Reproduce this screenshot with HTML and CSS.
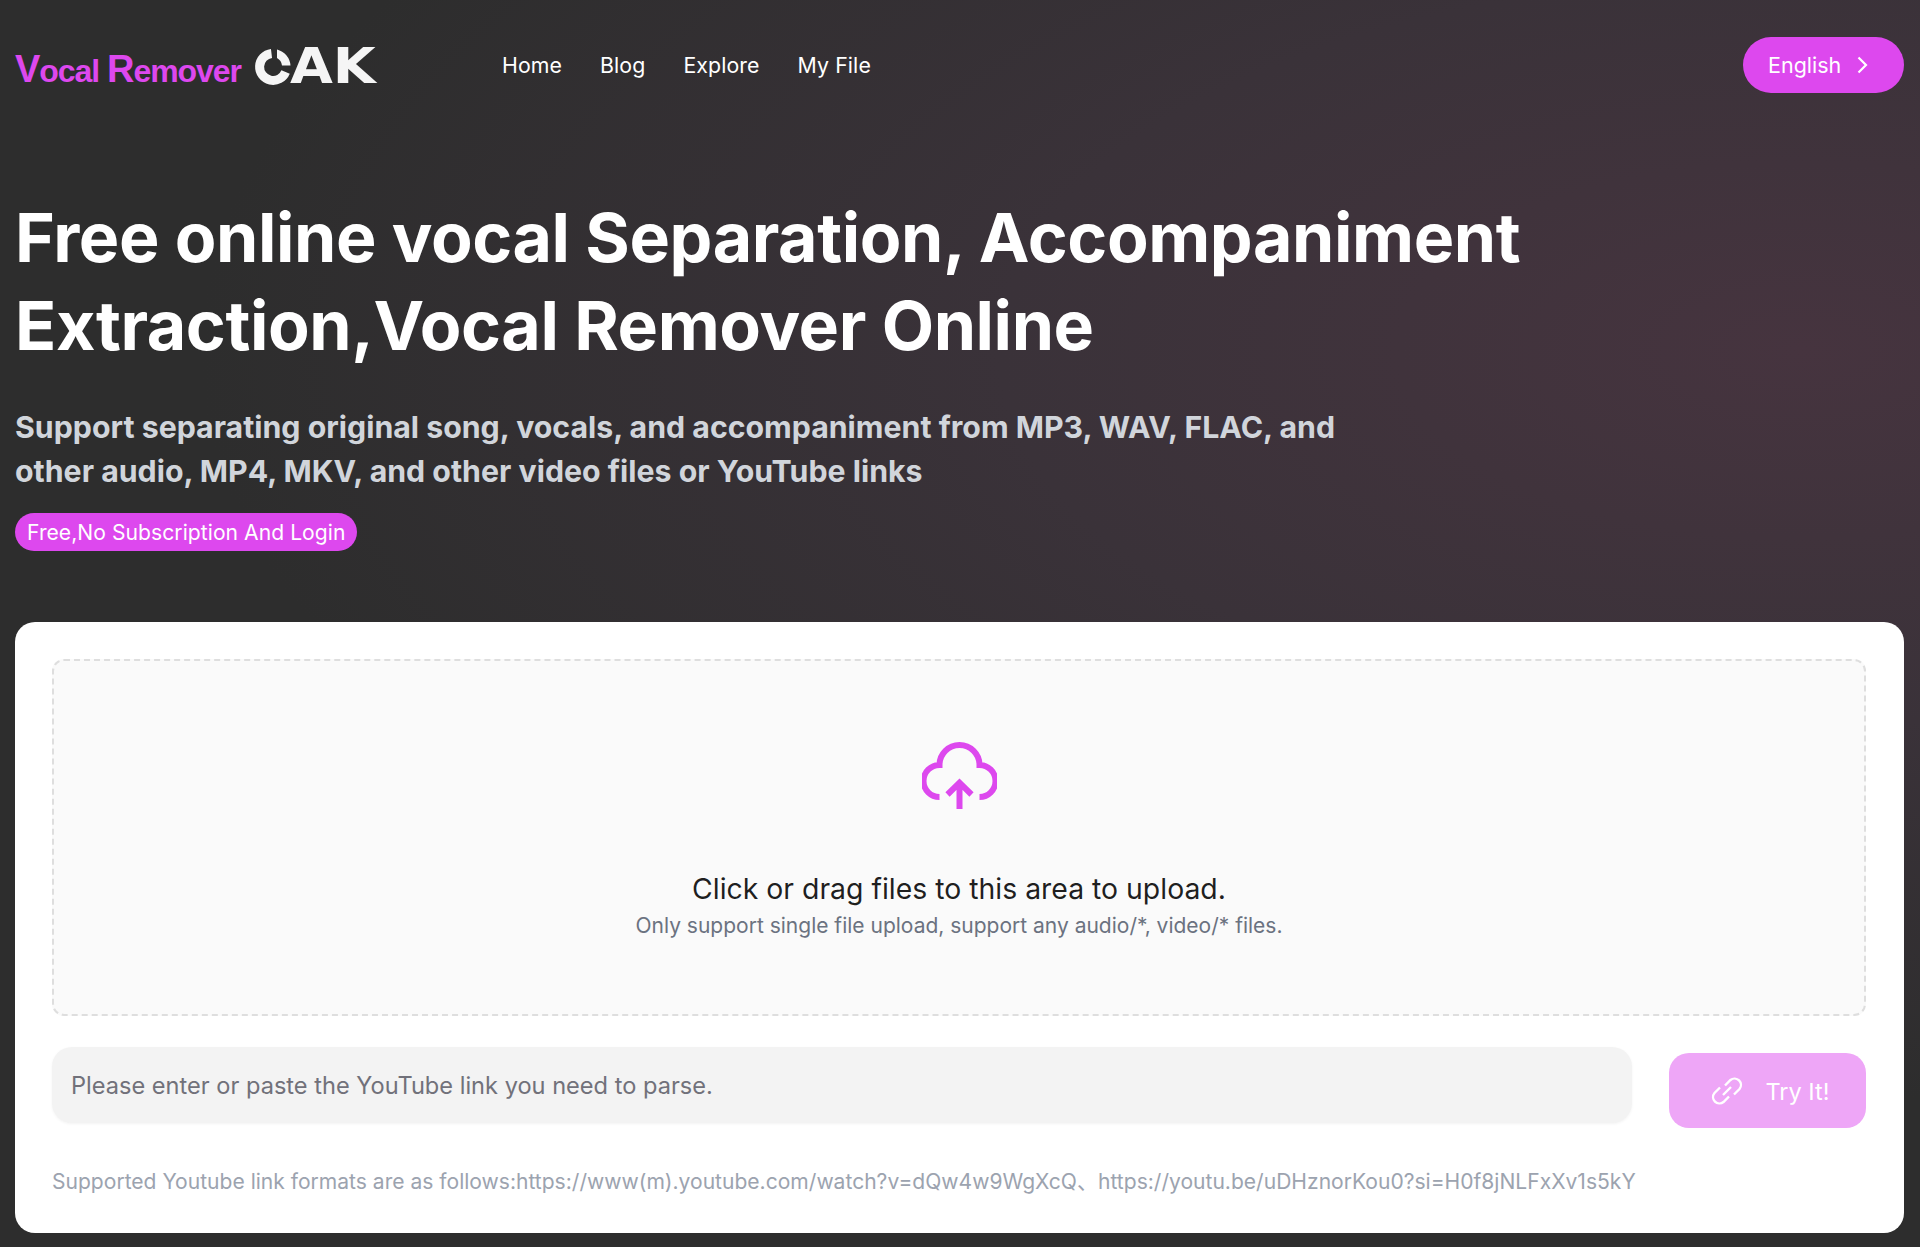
FILE: index.html
```html
<!DOCTYPE html>
<html lang="en">
<head>
    <meta charset="UTF-8">
    <title>Vocal Remover OAK</title>
    <link rel="stylesheet" href="styles.css">
</head>
<body>
<div class="page">
    <header class="topbar">
        <a class="logo" href="#">
            <span class="logo-name"><span class="big">V</span>ocal <span class="big">R</span>emover</span>
            <span class="logo-oak">
                <svg class="logo-ring" viewBox="0 0 38 38" width="38" height="38" aria-hidden="true">
                    <path d="M17.500 5.500A13.500 13.500 0 1 0 31.600 24" fill="none" stroke="#f5f5f5" stroke-width="9"/>
                    <path d="M23 1.500A18 18 0 0 1 36.500 17.500H28A10 10 0 0 0 23 10Z" fill="#f5f5f5"/>
                </svg>
                <span class="logo-ak">AK</span>
            </span>
        </a>
        <nav class="nav">
            <a href="#">Home</a>
            <a href="#">Blog</a>
            <a href="#">Explore</a>
            <a href="#">My File</a>
        </nav>
        <button class="lang-btn">
            English
            <svg viewBox="0 0 24 24" width="24" height="24" aria-hidden="true">
                <path d="M8.500 4.500l7.500 7.500-7.500 7.500" fill="none" stroke="#fff" stroke-width="2.200"/>
            </svg>
        </button>
    </header>

    <section class="hero">
        <h1>Free online vocal Separation, Accompaniment<br>Extraction,Vocal Remover Online</h1>
        <h2>Support separating original song, vocals, and accompaniment from MP3, WAV, FLAC, and<br>other audio, MP4, MKV, and other video files or YouTube links</h2>
        <span class="badge">Free,No Subscription And Login</span>
    </section>

    <main class="card">
        <div class="dropzone">
            <svg class="cloud" viewBox="0 0 75 67" width="75" height="67" aria-hidden="true">
                <path d="M17.500 55A16 16 0 0 1 17.500 23A20 20 0 0 1 57.500 23A16 16 0 0 1 57.500 55" fill="none" stroke="#dd48ee" stroke-width="6"/>
                <path d="M37.500 67V41M25.500 52.500L37.500 40.700L49.500 52.500" fill="none" stroke="#dd48ee" stroke-width="6"/>
            </svg>
            <p class="drop-title">Click or drag files to this area to upload.</p>
            <p class="drop-hint">Only support single file upload, support any audio/*, video/* files.</p>
        </div>
        <div class="link-row">
            <input class="link-input" type="text" placeholder="Please enter or paste the YouTube link you need to parse.">
            <button class="try-btn">
                <svg viewBox="0 0 32 32" width="32" height="32" aria-hidden="true">
                    <path d="M14 10.500l5.500-5.500a6.400 6.400 0 0 1 9 9l-5.500 5.500M18 21.500l-5.500 5.500a6.400 6.400 0 0 1-9-9l5.500-5.500M12 20l8-8" fill="none" stroke="#fff" stroke-width="2.400"/>
                </svg>
                Try It!
            </button>
        </div>
        <p class="formats">Supported Youtube link formats are as follows:https://www(m).youtube.com/watch?v=dQw4w9WgXcQ、https://youtu.be/uDHznorKou0?si=H0f8jNLFxXv1s5kY</p>
    </main>
</div>
</body>
</html>
```

FILE: styles.css
```css
* {
    box-sizing: border-box;
}

html, body {
    margin: 0;
    height: 100%;
}

body {
    font-family: Inter, "Noto Sans CJK SC", sans-serif;
    color: #fff;
    background-color: #2d2d2d;
}

.page {
    height: 1247px;
    padding: 0 16px 14px 15px;
    overflow: hidden;
    background: radial-gradient(ellipse 1600px 750px at 1800px 350px, #46343f 0%, #3a3239 50%, #2d2d2d 100%);
}

.topbar {
    display: flex;
    align-items: center;
    height: 130px;
}

.logo {
    display: flex;
    align-items: center;
    gap: 13px;
    width: 487px;
    text-decoration: none;
}

.logo-name {
    margin-top: 8px;
    color: #dd48ee;
    font-family: "Liberation Sans", sans-serif;
    font-size: 32px;
    font-weight: 700;
    letter-spacing: -1.05px;
}

.logo-name .big {
    font-size: 38px;
}

.logo-oak {
    display: flex;
    align-items: center;
    margin-top: 3px;
}

.logo-ring {
    margin-right: -2px;
}

.logo-ak {
    color: #f5f5f5;
    font-family: "DejaVu Sans", sans-serif;
    font-size: 49px;
    line-height: 38px;
    font-weight: 700;
    transform: scaleX(1.13);
    transform-origin: left center;
}

.nav {
    display: flex;
    gap: 38px;
}

.nav a {
    color: #fff;
    font-size: 21.300px;
    font-weight: 400;
    letter-spacing: 0.1px;
    text-decoration: none;
}

.lang-btn {
    display: flex;
    align-items: center;
    gap: 9px;
    margin-left: auto;
    width: 161px;
    height: 56px;
    padding: 0 0 0 25px;
    border: 0;
    border-radius: 28px;
    color: #fff;
    background-color: #dd48ee;
    font-family: inherit;
    font-size: 21.500px;
    font-weight: 400;
}

.hero h1 {
    margin: 63px 0 0;
    font-size: 68px;
    line-height: 88px;
    font-weight: 700;
    letter-spacing: -0.4px;
}

.hero h2 {
    margin: 36px 0 0;
    color: #d1d5db;
    font-size: 30.300px;
    line-height: 44px;
    font-weight: 700;
}

.badge {
    display: inline-block;
    margin-top: 20px;
    padding: 0 12px;
    height: 38px;
    border-radius: 19px;
    color: #fff;
    background-color: #dd48ee;
    font-size: 21.100px;
    letter-spacing: 0.05px;
    line-height: 39px;
}

.card {
    margin-top: 71px;
    height: 611px;
    padding: 37px 38px 0 37px;
    border-radius: 20px;
    color: #111827;
    background-color: #fff;
}

.dropzone {
    display: flex;
    flex-direction: column;
    align-items: center;
    height: 357px;
    padding-top: 81px;
    border: 2px dashed #dedede;
    border-radius: 12px;
    background-color: #fafafa;
}

.cloud {
    display: block;
}

.drop-title {
    margin: 59px 0 0;
    font-size: 28.400px;
    line-height: 42px;
    color: rgba(0, 0, 0, 0.88);
}

.drop-hint {
    margin: 0;
    font-size: 21px;
    line-height: 32px;
    color: #6b7280;
}

.link-row {
    display: flex;
    align-items: flex-start;
    justify-content: space-between;
    margin-top: 31px;
}

.link-input {
    width: 1580px;
    height: 76px;
    padding: 0 19px;
    border: 0;
    border-radius: 20px;
    background-color: #f3f3f3;
    box-shadow: 0 1px 3px rgba(0, 0, 0, 0.05);
    font-family: inherit;
    font-size: 23.600px;
    outline: none;
}

.link-input::placeholder {
    color: #71717a;
    opacity: 1;
}

.try-btn {
    display: flex;
    align-items: center;
    justify-content: center;
    gap: 23px;
    width: 197px;
    height: 75px;
    margin-top: 6px;
    padding: 1px 0 0 5px;
    border: 0;
    border-radius: 20px;
    color: #fff;
    background-color: #eea6f7;
    font-family: inherit;
    font-size: 23.500px;
}

.formats {
    margin: 38px 0 0;
    font-size: 21.070px;
    line-height: 32px;
    color: #9ca3af;
}
```
